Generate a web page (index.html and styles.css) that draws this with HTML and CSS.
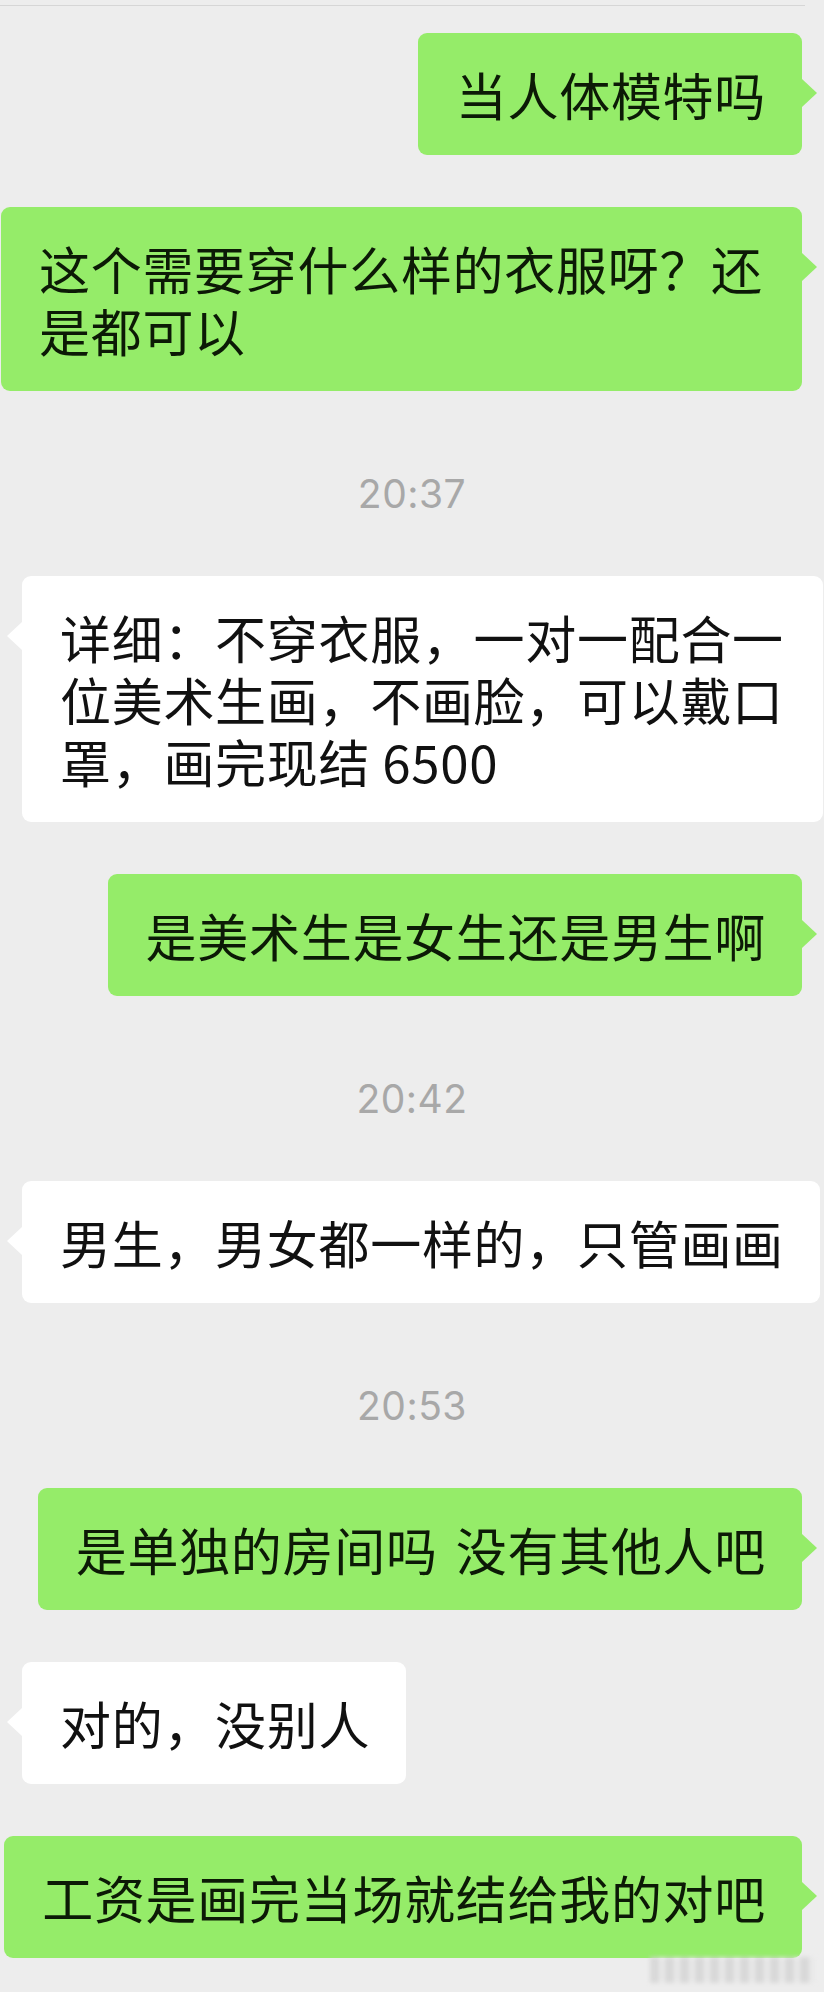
FILE: index.html
```html
<!DOCTYPE html>
<html>
  <head>
    <meta charset="utf-8" />
    <link rel="stylesheet" href="styles.css">
  </head>

  <body>
    <div class="chat">
      <div class="top-line"></div>

      <div class="messages">
        <div class="row sent">
          <div class="bubble">当人体模特吗</div>
        </div>

        <div class="row sent">
          <div class="bubble">这个需要穿什么样的衣服呀？还是都可以</div>
        </div>

        <div class="time">20:37</div>

        <div class="row received">
          <div class="bubble">详细：不穿衣服，一对一配合一位美术生画，不画脸，可以戴口罩，画完现结 6500</div>
        </div>

        <div class="row sent">
          <div class="bubble">是美术生是女生还是男生啊</div>
        </div>

        <div class="time">20:42</div>

        <div class="row received">
          <div class="bubble">男生，男女都一样的，只管画画</div>
        </div>

        <div class="time">20:53</div>

        <div class="row sent">
          <div class="bubble wide-space">是单独的房间吗 没有其他人吧</div>
        </div>

        <div class="row received">
          <div class="bubble">对的，没别人</div>
        </div>

        <div class="row sent">
          <div class="bubble">工资是画完当场就结给我的对吧</div>
        </div>
      </div>

      <!-- blurred watermark in the corner -->
      <div class="watermark"></div>
    </div>
  </body>
</html>
```

FILE: styles.css
```css
body {
  margin: 0;
  background-color: #ededed;
  font-family: "Noto Sans CJK SC", "Noto Sans", sans-serif;
}

.chat {
  position: relative;
  width: 824px;
  height: 1992px;
  padding-top: 5px;
  box-sizing: border-box;
  overflow: hidden;
}

.top-line {
  width: 805px;
  height: 1px;
  background-color: #d6d6d6;
}

.messages {
  display: flex;
  flex-direction: column;
  gap: 52px;
  padding-top: 27px;
}

.row {
  display: flex;
}

.row.sent {
  justify-content: flex-end;
  padding-right: 22px;
}

.row.received {
  justify-content: flex-start;
  padding-left: 22px;
}

.bubble {
  position: relative;
  max-width: 727px;
  padding: 30px 36px 30px 38px;
  border-radius: 9px;
  font-size: 51px;
  letter-spacing: 0.7px;
  line-height: 62px;
  color: #111;
}

.bubble.wide-space {
  word-spacing: 6px;
}

.sent .bubble {
  background-color: #95ec69;
  color: #0c1a06;
}

.received .bubble {
  background-color: #fff;
}

/* little tails next to the bubbles */
.bubble::after {
  content: "";
  position: absolute;
  top: 46px;
  border-top: 14px solid transparent;
  border-bottom: 14px solid transparent;
}

.sent .bubble::after {
  right: -15px;
  border-left: 15px solid #95ec69;
}

.received .bubble::after {
  left: -15px;
  border-right: 15px solid #fff;
}

.time {
  height: 40px;
  margin: 31px 0 10px;
  text-align: center;
  font-family: Inter, "Liberation Sans", sans-serif;
  font-size: 39px;
  line-height: 40px;
  letter-spacing: 0.5px;
  color: #a8a8a8;
}

.watermark {
  position: absolute;
  left: 650px;
  top: 1957px;
  width: 165px;
  height: 26px;
  background: repeating-linear-gradient(90deg, #d4d4d4 0 9px, #e8e8e8 9px 15px);
  filter: blur(2px);
  opacity: 0.8;
}
```
